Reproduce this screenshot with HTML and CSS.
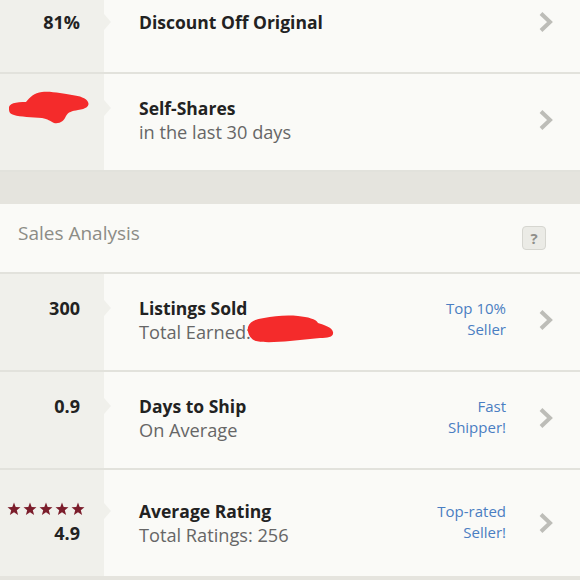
FILE: index.html
```html
<!DOCTYPE html>
<html>
<head>
    <title>Seller Stats</title>
    <link rel="stylesheet" href="styles.css">
</head>
<body>
    <div class="card top">
        <div class="row first">
            <div class="stat">
                <div class="num">81%</div>
            </div>
            <div class="info">
                <div class="text">
                    <div class="title">Discount Off Original</div>
                </div>
                <svg class="chevron" width="14" height="22" viewBox="0 0 14 22"><path d="M2 2.5 L11 11 L2 19.5" fill="none" stroke="#bdbdb8" stroke-width="4"/></svg>
            </div>
        </div>
        <div class="row">
            <div class="stat">
                <div class="num"></div>
                <div class="num"></div>
            </div>
            <div class="info">
                <div class="text">
                    <div class="title">Self-Shares</div>
                    <div class="sub">in the last 30 days</div>
                </div>
                <svg class="chevron" width="14" height="22" viewBox="0 0 14 22"><path d="M2 2.5 L11 11 L2 19.5" fill="none" stroke="#bdbdb8" stroke-width="4"/></svg>
            </div>
            <svg class="scribble one" width="84" height="38" viewBox="0 0 84 38"><path d="M3 20 C2 14 10 13 20 13 C24 8 28 4 36 3 C46 2 58 5 66 6 C74 7 80 9 82 13 C84 17 80 20 72 21 C66 22 62 23 60 27 C58 32 54 35 48 34 C44 32 42 30 36 29 C26 28 14 28 8 26 C4 25 3 23 3 20 Z" fill="#f42b2b"/></svg>
        </div>
    </div>

    <div class="band"></div>

    <div class="card">
        <div class="head">
            <span class="head-title">Sales Analysis</span>
            <span class="help">?</span>
        </div>
        <div class="row">
            <div class="stat">
                <div class="num">300</div>
                <div class="num"></div>
            </div>
            <div class="info">
                <div class="text">
                    <div class="title">Listings Sold</div>
                    <div class="sub">Total Earned: $</div>
                </div>
                <div class="badge">Top 10%<br>Seller</div>
                <svg class="chevron" width="14" height="22" viewBox="0 0 14 22"><path d="M2 2.5 L11 11 L2 19.5" fill="none" stroke="#bdbdb8" stroke-width="4"/></svg>
            </div>
            <svg class="scribble two" width="90" height="32" viewBox="0 0 90 32"><path d="M2 14 C4 8 10 6 18 5 C28 3 40 2 52 3 C62 4 70 6 72 10 C78 12 86 14 87 19 C88 24 82 25 74 25 C64 26 54 27 44 28 C32 29 18 30 10 28 C4 26 1 20 2 14 Z" fill="#f42b2b"/></svg>
        </div>
        <div class="row">
            <div class="stat">
                <div class="num">0.9</div>
                <div class="num"></div>
            </div>
            <div class="info">
                <div class="text">
                    <div class="title">Days to Ship</div>
                    <div class="sub">On Average</div>
                </div>
                <div class="badge">Fast<br>Shipper!</div>
                <svg class="chevron" width="14" height="22" viewBox="0 0 14 22"><path d="M2 2.5 L11 11 L2 19.5" fill="none" stroke="#bdbdb8" stroke-width="4"/></svg>
            </div>
        </div>
        <div class="row tall">
            <div class="stat">
                <div class="stars">
                    <svg width="78" height="14" viewBox="0 0 78 14" fill="#7b1d2b">
                        <path id="star" d="M7 0.5 L8.7 5 L13.5 5.2 L9.8 8.2 L11.1 13 L7 10.3 L2.9 13 L4.2 8.2 L0.5 5.2 L5.3 5 Z"/>
                        <use href="#star" x="16"/>
                        <use href="#star" x="32"/>
                        <use href="#star" x="48"/>
                        <use href="#star" x="64"/>
                    </svg>
                </div>
                <div class="num">4.9</div>
            </div>
            <div class="info">
                <div class="text">
                    <div class="title">Average Rating</div>
                    <div class="sub">Total Ratings: 256</div>
                </div>
                <div class="badge">Top-rated<br>Seller!</div>
                <svg class="chevron" width="14" height="22" viewBox="0 0 14 22"><path d="M2 2.5 L11 11 L2 19.5" fill="none" stroke="#bdbdb8" stroke-width="4"/></svg>
            </div>
        </div>
    </div>

    <div class="band"></div>
</body>
</html>
```

FILE: styles.css
```css
body {
    margin: 0;
    font-family: 'Open Sans', 'Noto Sans', sans-serif;
    background: #e5e4de;
    color: #222;
    overflow: hidden;
}

.card {
    background: #fafaf7;
}

.top {
    margin-top: -24px;
}

.row {
    position: relative;
    display: flex;
    height: 96px;
    border-bottom: 2px solid #e2e2dc;
}

.row.tall {
    height: 106px;
    border-bottom: none;
}

.stat {
    width: 104px;
    box-sizing: border-box;
    padding: 0 24px 4px 0;
    background: #f0f0eb;
    display: flex;
    flex-direction: column;
    justify-content: center;
    align-items: flex-end;
}

.row.tall .stat,
.row.tall .info {
    padding-bottom: 0;
}

.num {
    height: 24px;
    line-height: 24px;
    font-size: 18px;
    font-weight: 700;
    color: #222;
}

.stars {
    height: 24px;
    display: flex;
    align-items: center;
    margin-right: -5px;
    margin-top: -4px;
}

.info {
    flex: 1;
    display: flex;
    align-items: center;
    padding: 0 27px 4px 35px;
}

.text {
    flex: 1;
}

.title {
    position: relative;
    height: 24px;
    line-height: 24px;
    font-size: 17.5px;
    font-weight: 700;
    color: #222;
}

/* little pointer from the stat column */
.title::before {
    content: "";
    position: absolute;
    left: -35px;
    top: 4px;
    border-left: 7px solid #f0f0eb;
    border-top: 8px solid transparent;
    border-bottom: 8px solid transparent;
}

.sub {
    height: 24px;
    line-height: 24px;
    font-size: 18.2px;
    color: #666;
}

.badge {
    text-align: right;
    font-size: 15px;
    line-height: 21px;
    color: #4a7ec2;
    margin-right: 33px;
    margin-top: -2px;
}

.chevron {
    display: block;
}

.band {
    height: 32px;
}

.head {
    display: flex;
    align-items: flex-start;
    justify-content: space-between;
    height: 70px;
    box-sizing: border-box;
    padding: 17px 34px 0 18px;
    border-bottom: 2px solid #e2e2dc;
}

.head-title {
    font-size: 19px;
    line-height: 24px;
    color: #8c8c86;
}

.help {
    margin-top: 5px;
    width: 22px;
    height: 22px;
    line-height: 22px;
    text-align: center;
    border: 1px solid #d6d6d0;
    border-radius: 4px;
    background: #ebebe6;
    color: #8f8f8a;
    font-weight: 700;
    font-size: 15px;
}

.scribble {
    position: absolute;
}

.scribble.one {
    left: 6px;
    top: 15px;
}

.scribble.two {
    left: 246px;
    top: 39px;
}
```
